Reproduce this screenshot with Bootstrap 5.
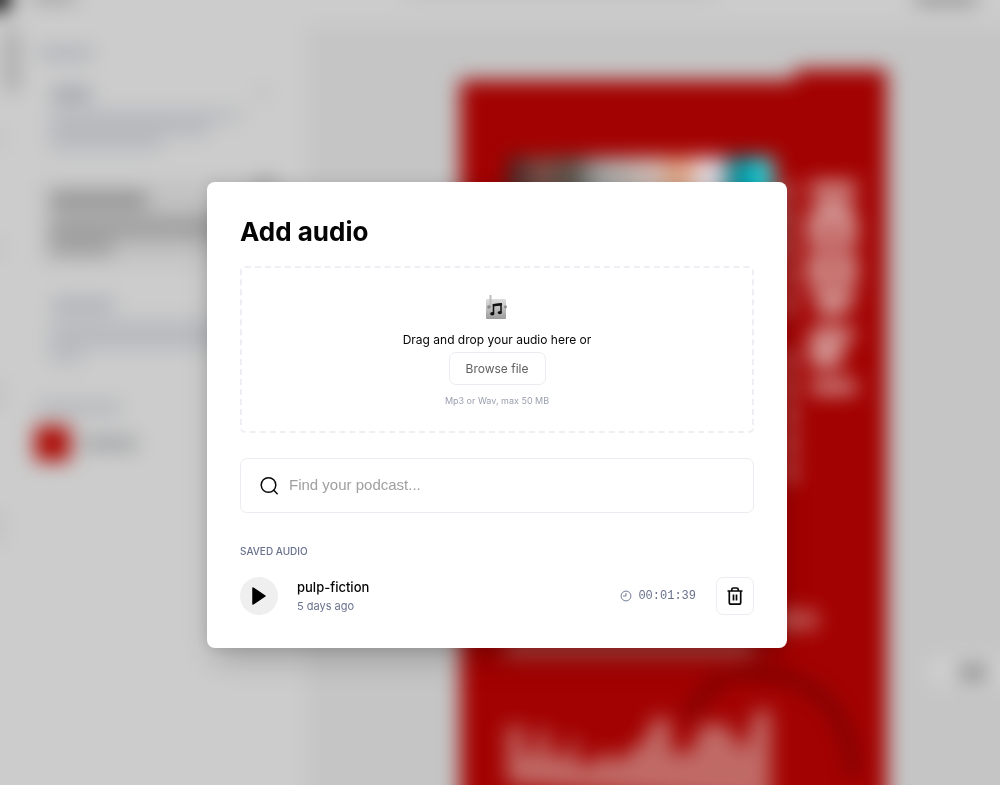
<!DOCTYPE html>
<html lang="en">
<head>
<meta charset="utf-8">
<meta name="viewport" content="width=device-width, initial-scale=1">
<title>Add audio</title>
<link rel="stylesheet" href="https://cdn.jsdelivr.net/npm/bootstrap@5.3.0/dist/css/bootstrap.min.css">
<style>
  body { font-family: Inter, "Liberation Sans", sans-serif; background: #cbcbcb; color: #050505; }
  .editor-backdrop { z-index: -1; }
  .dialog-area { padding: 45px 6px 0 0; }
  .audio-dialog { max-width: 580px; padding: 33px; border-radius: 8px; box-shadow: 0 18px 30px -8px rgba(0,0,0,.22), 0 0 16px rgba(0,0,0,.12); }
  .dialog-title { font-size: 26px; line-height: 34px; font-weight: 700; margin-bottom: 17px; }
  .drop-zone { border: 2px dashed #eeeef5; border-radius: 5px; padding: 27px 16px 22px; margin-bottom: 25px; }
  .drop-text { font-size: 12px; line-height: 20px; margin: 9px 0 2px; }
  .soft-line { border: 1px solid #ececf2; border-radius: 7px; background: #fff; }
  .browse-btn { font-size: 12px; line-height: 20px; color: #606060; width: 97px; height: 33px; }
  .drop-note { font-size: 9px; line-height: 16px; color: #9a9fae; margin-top: 8px; }
  .find-box { height: 55px; padding: 0 18px; gap: 10px; margin-bottom: 30px; }
  .find-input { font-family: "Liberation Sans", sans-serif; font-size: 15px; outline: 0; }
  .find-input::placeholder { color: #a0a0a0; opacity: 1; }
  .list-title { font-size: 10px; line-height: 16px; font-weight: 500; color: #68718d; margin-bottom: 18px; }
  .play-btn { width: 38px; height: 38px; background: #efefef; }
  .track-text { margin-left: 19px; }
  .track-name { font-size: 13px; line-height: 20px; font-weight: 500; }
  .track-age { font-size: 11px; line-height: 18px; color: #68718d; }
  .track-time { font: 12px/18px "Liberation Mono", monospace; color: #68718d; gap: 6px; margin-right: 20px; }
  .trash-btn { width: 38px; height: 38px; }
</style>
</head>
<body>

<!-- Blurred editor behind the dialog -->
<svg class="editor-backdrop position-fixed top-0 start-0 w-100 h-100" viewBox="0 0 1000 785" preserveAspectRatio="xMidYMin slice" aria-hidden="true">
  <defs>
    <filter id="soft" filterUnits="userSpaceOnUse" x="-60" y="-60" width="1120" height="920" color-interpolation-filters="sRGB"><feGaussianBlur stdDeviation="10"/></filter>
    <linearGradient id="photo">
      <stop offset="0" stop-color="#3a2022"/><stop offset=".12" stop-color="#7d5148"/><stop offset=".24" stop-color="#555048"/>
      <stop offset=".34" stop-color="#a0a3a2"/><stop offset=".55" stop-color="#d0bdb6"/><stop offset=".65" stop-color="#de9a74"/>
      <stop offset=".74" stop-color="#e6e2ea"/><stop offset=".81" stop-color="#c5c4cd"/><stop offset=".84" stop-color="#06757e"/>
      <stop offset=".91" stop-color="#02b6c4"/><stop offset="1" stop-color="#58e0e0"/>
    </linearGradient>
  </defs>
  <g filter="url(#soft)">
    <rect x="-60" y="-60" width="1120" height="920" fill="#cccccc"/>
    <rect x="306" y="25" width="760" height="840" fill="#c5c5c5"/>
    <!-- top bar -->
    <circle cx="-3" cy="-2" r="14" fill="#000"/>
    <rect x="32" y="-8" width="44" height="10" fill="#989898"/>
    <rect x="405" y="-13" width="310" height="9" fill="#b8b8b8"/>
    <rect x="915" y="-7" width="62" height="12" fill="#929292"/>
    <rect x="5" y="29" width="14" height="64" rx="6" fill="#a8a8a8"/>
    <!-- sidebar -->
    <g fill="#a8abb2">
      <rect x="39" y="48" width="54" height="10"/>
      <rect x="52" y="88" width="39" height="13" fill="#9da0a8"/>
      <path d="M50 110h192v11h-32v15h-48v14H50z" opacity=".6"/>
      <rect x="52" y="299" width="62" height="12"/>
      <path d="M50 320h170v29H82v14H50z" opacity=".55"/>
      <rect x="37" y="402" width="84" height="11" opacity=".8"/>
      <circle cx="262" cy="93" r="5" opacity=".8"/>
      <path d="M-4 130h4v18h-4zM-4 240h4v18h-4zM-4 380h4v30h-4zM-4 510h4v35h-4z"/>
    </g>
    <rect x="41" y="181" width="245" height="83" fill="#c2c2c2"/>
    <g fill="#808080">
      <rect x="51" y="193" width="96" height="14" opacity=".85"/>
      <path d="M50 215h180v25H113v16H50z" opacity=".5"/>
      <rect x="255" y="180" width="20" height="7"/>
    </g>
    <rect x="35" y="426" width="35" height="35" rx="3" fill="#ac0903"/>
    <rect x="82" y="437" width="55" height="13" fill="#9fa1a3"/>
    <!-- poster -->
    <path d="M460 80h335V69h92v800H460z" fill="#a20201"/>
    <rect x="508" y="157" width="266" height="100" fill="url(#photo)"/>
    <g fill="none" stroke="#d6a19e">
      <path d="M810 188h46M814 206h38M814 220v20h36v-20zM814 260v20h36v-20zM812 298h42M822 314l26-12M812 334h42M816 334v20h20v-20M811 361h30M811 387h45" stroke-width="13"/>
      <path d="M788 182v142M788 350v50M790 406v82" stroke-width="12" stroke-dasharray="20 8" opacity=".65"/>
    </g>
    <rect x="770" y="611" width="48" height="18" fill="#bc5c58"/>
    <rect x="505" y="637" width="248" height="20" fill="#b44541"/>
    <path d="M688 718q16-32 42-42M735 674q60-4 88 24 28 24 30 78" fill="none" stroke="#700303" stroke-width="9"/>
    <path d="M507 784V726h16v28h14v-24h12v26h20v-18h8v26h16l12-14 12 12 16-14 10-6 12-26 16 4v32h20l10-28 26 0 8 16 10 10 10-40h16v95z" fill="#c06a66"/>
    <rect x="928" y="657" width="100" height="29" rx="8" fill="#cfcfcf"/>
    <rect x="960" y="666" width="26" height="13" fill="#808080"/>
  </g>
</svg>

<main class="dialog-area min-vh-100 d-flex align-items-center justify-content-center">
  <section class="audio-dialog bg-white w-100" role="dialog" aria-labelledby="dialogTitle">
    <h1 class="dialog-title" id="dialogTitle">Add audio</h1>

    <div class="drop-zone d-flex flex-column align-items-center text-center">
      <svg width="24" height="26" viewBox="0 0 24 26" aria-hidden="true">
        <defs><linearGradient id="tile" x2="0" y2="1"><stop stop-color="#dedede"/><stop offset="1" stop-color="#9c9c9c"/></linearGradient></defs>
        <rect x="1" y="4" width="20" height="20" rx="1" fill="url(#tile)"/>
        <path d="M5.500 0v13" stroke="#bcbcbc" stroke-width="2"/>
        <circle cx="4" cy="12" r="1.800" fill="#888"/><circle cx="20.500" cy="12" r="1.400" fill="#888"/>
        <path d="M8.500 18.500V10l7.500-.8v8" fill="none" stroke="#111" stroke-width="1.500"/>
        <path d="M7.800 9l9-1v2.500l-9 1z" fill="#111"/>
        <ellipse cx="7.300" cy="18.800" rx="2.100" ry="1.700" fill="#111"/><ellipse cx="14.800" cy="17.600" rx="2.100" ry="1.700" fill="#111"/>
      </svg>
      <p class="drop-text">Drag and drop your audio here or</p>
      <button type="button" class="browse-btn soft-line p-0">Browse file</button>
      <p class="drop-note mb-0">Mp3 or Wav, max 50 MB</p>
    </div>

    <label class="find-box soft-line d-flex align-items-center">
      <svg width="20" height="20" viewBox="0 0 20 20" fill="none" stroke="#080808" stroke-width="1.500" stroke-linecap="round" aria-hidden="true"><circle cx="9.500" cy="9" r="7.300"/><path d="M14.800 14.300l3.400 3.400"/></svg>
      <input type="text" class="find-input border-0 p-0 flex-grow-1" placeholder="Find your podcast..." aria-label="Find your podcast">
    </label>

    <h2 class="list-title text-uppercase">Saved audio</h2>
    <div class="d-flex align-items-center">
      <button type="button" class="play-btn border-0 rounded-circle p-0 d-flex align-items-center justify-content-center" aria-label="Play pulp-fiction">
        <svg width="20" height="20" viewBox="0 0 20 20" aria-hidden="true"><path d="M4 2l12 8-12 8z" stroke="#000" stroke-width="1.500" stroke-linejoin="round"/></svg>
      </button>
      <div class="track-text me-auto">
        <div class="track-name">pulp-fiction</div>
        <div class="track-age">5 days ago</div>
      </div>
      <div class="track-time d-flex align-items-center">
        <svg width="12" height="12" viewBox="0 0 12 12" fill="none" stroke="#747d96" aria-hidden="true"><circle cx="6" cy="6" r="4.900"/><path d="M6 3v3H3"/></svg>
        <time>00:01:39</time>
      </div>
      <button type="button" class="trash-btn soft-line p-0 d-flex align-items-center justify-content-center" aria-label="Delete pulp-fiction">
        <svg width="18" height="20" viewBox="0 0 18 20" fill="none" stroke="#080808" stroke-width="1.700" stroke-linejoin="round" aria-hidden="true"><path d="M1.500 5h15M3.300 5v11.500q0 1.700 1.700 1.700h8q1.700 0 1.700-1.700V5M5.800 5V3.500q0-1.500 1.500-1.500h3.400q1.500 0 1.500 1.500V5M7.500 8.500v6M10.500 8.500v6"/></svg>
      </button>
    </div>
  </section>
</main>
<script src="https://cdn.jsdelivr.net/npm/bootstrap@5.3.0/dist/js/bootstrap.bundle.min.js"></script>
</body>
</html>
